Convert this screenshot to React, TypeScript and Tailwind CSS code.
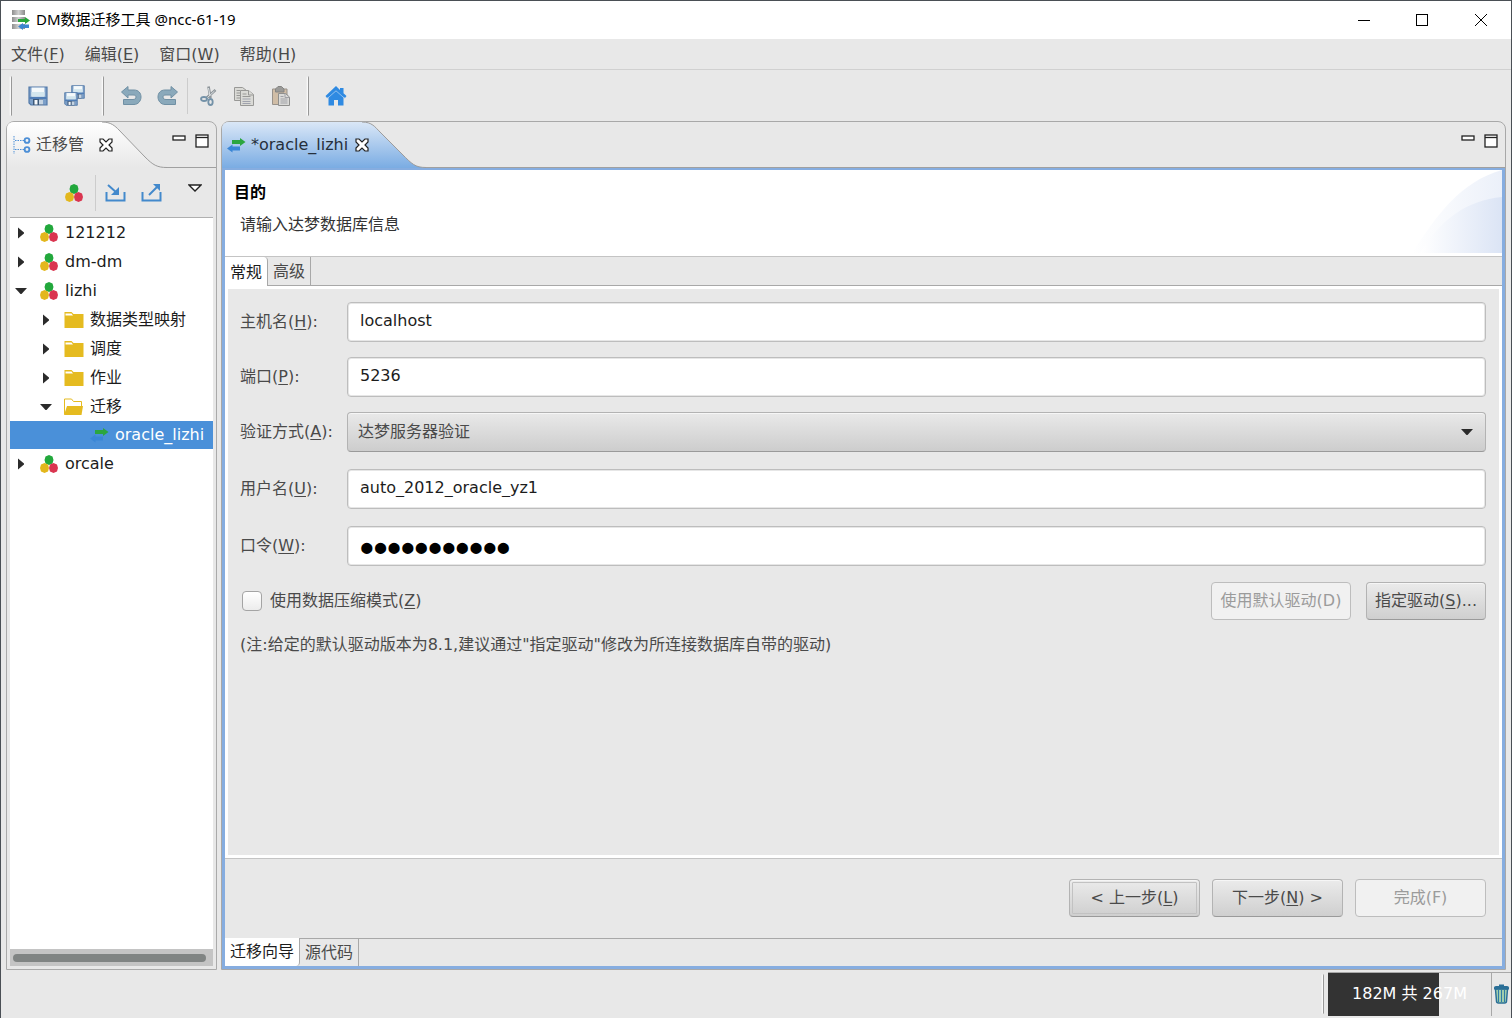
import React from 'react';
import clsx from 'clsx';

/* ---------- Icons ---------- */

function AppIcon() {
  return (
    <svg width="20" height="20" viewBox="0 0 20 20" aria-hidden="true">
      <defs>
        <linearGradient id="disk" x1="0" x2="1">
          <stop offset="0" stopColor="#8e8e8e" />
          <stop offset="0.5" stopColor="#d0d0d0" />
          <stop offset="1" stopColor="#8a8a8a" />
        </linearGradient>
      </defs>
      <rect x="1" y="0" width="13" height="5" fill="url(#disk)" />
      <rect x="1" y="7" width="13" height="5" fill="url(#disk)" />
      <rect x="1" y="14" width="13" height="5" fill="url(#disk)" />
      <path d="M7 9h7V7l5 3.500-5 3.500v-2H7z" fill="#27a53a" />
      <path d="M18 14.500h-6v-1.500l-5 3.500 5 3.500v-2h6z" fill="#3b86d0" />
    </svg>
  );
}

function Floppy({ x = 0, y = 0, size = 20 }: { x?: number; y?: number; size?: number }) {
  return (
    <svg x={x} y={y} width={size} height={size} viewBox="0 0 20 20" aria-hidden="true">
      <path d="M1 1h18v18H3l-2-2z" fill="#7c9fc8" stroke="#5279a8" strokeWidth="1.200" />
      <rect x="3.500" y="1.500" width="13" height="9" fill="#f4f9fb" />
      <path d="M3.500 6h13v4.500h-13z" fill="#d3e6ee" />
      <path d="M1.500 11h17v2h-17z" fill="#4f7db6" />
      <rect x="5" y="13" width="10" height="6" fill="#3c5878" />
      <rect x="6.500" y="14" width="3" height="4.500" fill="#f7f9fb" />
      <rect x="11" y="13.500" width="4" height="5" fill="#c5d4e3" />
    </svg>
  );
}

function SaveAllIcon() {
  return (
    <svg width="21" height="21" viewBox="0 0 21 21" aria-hidden="true">
      <Floppy x={7} y={0} size={14} />
      <Floppy x={0} y={7} size={14} />
    </svg>
  );
}

function UndoIcon({ flip = false }: { flip?: boolean }) {
  return (
    <svg width="21" height="20" viewBox="0 0 21 20" className={clsx(flip && '-scale-x-100')} aria-hidden="true">
      <path
        d="M0.500 6 7 0.500V4h6c4.500 0 7 3 7 7s-3 7.500-7 7.500H2.500v-5H12c2 0 3-1 3-2.500S14 9 12 9H7v3z"
        fill="#8aa9bb"
        stroke="#7090a4"
        strokeLinejoin="round"
      />
    </svg>
  );
}

function CutIcon() {
  return (
    <svg width="18" height="20" viewBox="0 0 18 20" fill="none" aria-hidden="true">
      <path d="M9.500 0.500 11.500 12M16.500 4 7 12.500" stroke="#8d9499" strokeWidth="2.600" />
      <path d="M9.500 2 11 10M15.500 5 8 12" stroke="#dfe3e5" />
      <ellipse cx="5" cy="13" rx="3" ry="2" stroke="#7492a8" strokeWidth="1.800" />
      <ellipse cx="11.500" cy="16" rx="2.200" ry="3" stroke="#7492a8" strokeWidth="1.800" />
    </svg>
  );
}

function CopyIcon() {
  return (
    <svg width="20" height="20" viewBox="0 0 20 20" fill="#dadad6" stroke="#989896" aria-hidden="true">
      <path d="M0.500 1.500h8l4 3v10h-12z" />
      <path d="M2.500 4.500h4M2.500 7h4M2.500 9.500h4M2.500 12h4" />
      <path d="M6.500 4.500h8l5 4v11h-13z" />
      <path d="M14.500 4.500v4.500h5M8.500 8h4M8.500 10.500h8" />
      <path d="M8.500 13h8M8.500 15.500h8M8.500 17.500h8" stroke="#a0a3ae" />
    </svg>
  );
}

function PasteIcon() {
  return (
    <svg width="19" height="20" viewBox="0 0 19 20" aria-hidden="true">
      <path d="M1.500 3h14.500v15.500h-14.500z" fill="#d0bda6" stroke="#98928b" />
      <path d="M4.500 3 7 0.500h3.500L13 3v3H4.500z" fill="#9a9a98" stroke="#858583" />
      <path d="M7.500 7.500h7l4 3.500v8.500h-11z" fill="#dadad8" stroke="#8f8f8d" />
      <path d="M14 7.500v4h4.500M9.500 10.500h3M9.500 13h7M9.500 15h7M9.500 17h7" fill="none" stroke="#a0a1a6" />
    </svg>
  );
}

function HomeIcon() {
  return (
    <svg width="22" height="20" viewBox="0 0 22 20" fill="#2f8ae2" aria-hidden="true">
      <path d="M11 0 0.500 10 2 12l1.500-1.300V19.500H9V14h4v5.500h5.500v-8.800L20 12l1.500-2-3-2.800V2h-3.500v2z" />
      <path d="M2.500 12.300 11 4.800l8.500 7.500" fill="none" stroke="#a9cdf0" strokeWidth="0.800" />
    </svg>
  );
}

function TreeViewIcon() {
  return (
    <svg width="18" height="18" viewBox="0 0 18 18" fill="none" stroke="#4d8fd6" aria-hidden="true">
      <path d="M1 0v18M2 4.500h9M2 13.500h9" strokeDasharray="1.500 1" />
      <circle cx="14" cy="4.500" r="2.400" strokeWidth="1.900" />
      <circle cx="14" cy="13.500" r="2.400" strokeWidth="1.900" />
    </svg>
  );
}

function ProjectIcon() {
  return (
    <svg width="18" height="18" viewBox="0 0 18 18" className="shrink-0" aria-hidden="true">
      <path d="M9 0l3.500 1.500L13.500 5l-1 3.500L9 10 5.500 8.500 4.500 5l1-3.500z" fill="#22a83c" />
      <path d="M4.500 8 8 9.500 9 13l-1 3.500L4.500 18 1 16.500 0 13l1-3.500z" fill="#e3b71d" />
      <path d="M13.500 8 17 9.500l1 3.500-1 3.500-3.500 1.500-3.500-1.500L9 13l1-3.500z" fill="#da3550" />
    </svg>
  );
}

function TrayIcon({ out = false }: { out?: boolean }) {
  return (
    <svg width="21" height="19" viewBox="0 0 21 19" fill="none" stroke="#4389cc" strokeWidth="2" aria-hidden="true">
      <path d="M1.500 9v8.500h18V9" />
      {out ? <path d="M8 12 17 3" /> : <path d="M3 2l9 8" />}
      <path d={out ? 'M12 1h7v7z' : 'M14 4v8H6z'} fill="#4389cc" stroke="none" />
    </svg>
  );
}

function FolderIcon({ open = false }: { open?: boolean }) {
  return (
    <svg width="20" height="17" viewBox="0 0 20 17" className="shrink-0" aria-hidden="true">
      {open ? (
        <>
          <path d="M0.500 16V1h7l2 2.500h8V8" fill="#fff" stroke="#e5bb20" />
          <path d="M3 8h16l-1.500 9H0z" fill="#e5bb20" />
        </>
      ) : (
        <path d="M0.500 1h7l2 2h10v14h-19z M1.500 2.500v2h7.500L7.500 2.500z" fill="#e5bb20" fillRule="evenodd" />
      )}
    </svg>
  );
}

function TransferIcon() {
  return (
    <svg width="19" height="15" viewBox="0 0 19 15" className="shrink-0" aria-hidden="true">
      <path d="M5 2h8V0l5.500 4L13 8V6H5z" fill="#2ba640" />
      <path d="M13 8.500H5.500V6.500L0 10.500l5.500 4v-2H13z" fill="#3a86d6" />
    </svg>
  );
}

function CloseIcon() {
  return (
    <svg width="14" height="15" viewBox="0 0 14 15" fill="#fff" stroke="#222" strokeWidth="1.200" aria-hidden="true">
      <path d="M1 1h3l3 3L10 1h3v3l-3 3 3 3v3h-3l-3-3-3 3H1v-3l3-3-3-3z" />
    </svg>
  );
}

function TrashIcon() {
  return (
    <svg width="15" height="20" viewBox="0 0 15 20" aria-hidden="true">
      <path d="M1.500 5h12l-1 12q0 2-2 2h-6q-2 0-2-2z" fill="#b5dcae" stroke="#2a6f97" strokeWidth="1.500" />
      <path d="M4.500 6v12M7.500 6v12M10.500 6v12" stroke="#2f7ba6" strokeWidth="1.300" />
      <path d="M0 3.500Q0 2 2 2h3V0.500h5V2h3q2 0 2 1.500V5.500H0z" fill="#2a6f97" />
    </svg>
  );
}

function Expander({ open }: { open: boolean }) {
  return (
    <svg width="12" height="12" viewBox="0 0 12 12" fill="#2b2b2b" className="shrink-0" aria-hidden="true">
      {open ? <path d="M0 3h12L6.500 9h-1z" /> : <path d="M3 0.500 9 5.500v1L3 11.500z" />}
    </svg>
  );
}

/* ---------- Small shared parts ---------- */

// Label with an underlined mnemonic, e.g. 文件(F)
function Mnemonic({ text, k, after = '' }: { text: string; k: string; after?: string }) {
  return (
    <>
      {text}(<span className="underline underline-offset-2">{k}</span>){after}
    </>
  );
}

function Grip() {
  return <div className="h-10 w-[3px] shrink-0 rounded-sm border-r border-[#989898] bg-gradient-to-r from-[#e8e8e8] to-white" />;
}

function ToolButton({ label, children }: { label: string; children: React.ReactNode }) {
  return (
    <button type="button" aria-label={label} className="flex h-9 w-9 items-center justify-center">
      {children}
    </button>
  );
}

function PaneControls() {
  return (
    <div className="flex gap-[9px] pt-3">
      <button type="button" aria-label="最小化" className="h-[14px]">
        <svg width="14" height="14" fill="#fff" stroke="#222" aria-hidden="true">
          <rect x="1" y="2" width="12" height="4" strokeWidth="1.300" />
        </svg>
      </button>
      <button type="button" aria-label="最大化" className="h-[14px]">
        <svg width="14" height="14" fill="#fff" stroke="#222" aria-hidden="true">
          <rect x="1" y="1" width="12" height="12" strokeWidth="1.300" />
          <path d="M1 3.500h12" strokeWidth="1.300" />
        </svg>
      </button>
    </div>
  );
}

const buttonBase = 'h-[38px] rounded border text-center';
const buttonOn =
  'border-[#b3b3b3] border-b-[#9a9a9a] bg-gradient-to-b from-[#ebebeb] to-[#cfcfcf] text-[#4a4a4a] shadow-[inset_0_1px_0_#f6f6f6]';
const buttonOff = 'border-[#bdbdbd] bg-[#f1f1f1] text-[#9b9b9b]';

/* ---------- Window chrome ---------- */

function TitleBar() {
  return (
    <header className="flex h-[38px] items-center bg-white pl-[10px] text-black">
      <AppIcon />
      <h1 className="ml-[5px] flex-1 pb-[2px] font-['Noto_Sans','Noto_Sans_CJK_SC',sans-serif] text-[15px]">
        DM数据迁移工具 @ncc-61-19
      </h1>
      <div className="flex">
        <button type="button" aria-label="最小化窗口" className="flex h-9 w-[58px] items-center justify-center">
          <svg width="12" height="12" stroke="#000"><path d="M0 6.500h12" /></svg>
        </button>
        <button type="button" aria-label="最大化窗口" className="flex h-9 w-[58px] items-center justify-center">
          <svg width="12" height="12" fill="none" stroke="#000"><rect x="0.500" y="0.500" width="11" height="11" /></svg>
        </button>
        <button type="button" aria-label="关闭窗口" className="flex h-9 w-[60px] items-center justify-center">
          <svg width="12" height="12" stroke="#000"><path d="M0 0l12 12M12 0 0 12" /></svg>
        </button>
      </div>
    </header>
  );
}

const menus = [
  { text: '文件', k: 'F' },
  { text: '编辑', k: 'E' },
  { text: '窗口', k: 'W' },
  { text: '帮助', k: 'H' },
];

function MenuBar() {
  return (
    <nav className="flex h-[31px] items-center gap-5 border-b border-[#d0d0d0] pt-[2px] pl-[10px]">
      {menus.map((m) => (
        <button key={m.k} type="button">
          <Mnemonic text={m.text} k={m.k} />
        </button>
      ))}
    </nav>
  );
}

function MainToolbar() {
  return (
    <div className="flex h-[51px] items-center pl-2">
      <Grip />
      <div className="mr-[9px] ml-2 flex">
        <ToolButton label="保存"><Floppy /></ToolButton>
        <ToolButton label="全部保存"><SaveAllIcon /></ToolButton>
      </div>
      <Grip />
      <div className="mr-2 ml-[9px] flex items-center">
        <ToolButton label="撤销"><UndoIcon /></ToolButton>
        <ToolButton label="重做"><UndoIcon flip /></ToolButton>
        <div className="mx-[2px] h-9 w-px bg-[#cccccc]" />
        <ToolButton label="剪切"><CutIcon /></ToolButton>
        <ToolButton label="复制"><CopyIcon /></ToolButton>
        <ToolButton label="粘贴"><PasteIcon /></ToolButton>
      </div>
      <Grip />
      <div className="ml-[9px] flex">
        <ToolButton label="主页"><HomeIcon /></ToolButton>
      </div>
    </div>
  );
}

/* ---------- Navigator ---------- */

type Node = { label: string; level: 0 | 1 | 2; kind: 'project' | 'folder' | 'transfer'; open?: boolean };

const nodes: Node[] = [
  { label: '121212', level: 0, kind: 'project' },
  { label: 'dm-dm', level: 0, kind: 'project' },
  { label: 'lizhi', level: 0, kind: 'project', open: true },
  { label: '数据类型映射', level: 1, kind: 'folder' },
  { label: '调度', level: 1, kind: 'folder' },
  { label: '作业', level: 1, kind: 'folder' },
  { label: '迁移', level: 1, kind: 'folder', open: true },
  { label: 'oracle_lizhi', level: 2, kind: 'transfer' },
  { label: 'orcale', level: 0, kind: 'project' },
];

function TreeRow({ node }: { node: Node }) {
  const leaf = node.kind === 'transfer';
  return (
    <li
      role="treeitem"
      aria-selected={leaf}
      aria-expanded={leaf ? undefined : !!node.open}
      className={clsx(
        'flex items-center whitespace-nowrap',
        node.level === 0 && 'h-[29px] pl-[5px]',
        node.level === 1 && 'h-[29px] pl-[30px]',
        node.level === 2 && 'h-7 bg-[#4a90d9] pl-[80px] text-white',
      )}
    >
      {!leaf && <Expander open={!!node.open} />}
      <span
        className={clsx(
          'flex',
          node.kind === 'project' && 'mr-[7px] ml-[13px]',
          node.kind === 'folder' && 'mr-[6px] ml-3',
          node.kind === 'transfer' && 'mr-[6px]',
        )}
      >
        {node.kind === 'project' && <ProjectIcon />}
        {node.kind === 'folder' && <FolderIcon open={node.open} />}
        {node.kind === 'transfer' && <TransferIcon />}
      </span>
      {node.label}
    </li>
  );
}

function Navigator() {
  return (
    <aside className="flex w-[211px] shrink-0 flex-col rounded-t-lg border border-[#aaaaaa]">
      <div className="flex h-[46px]">
        <div className="relative w-[160px] shrink-0">
          <svg width="160" height="46" className="absolute inset-0" aria-hidden="true">
            <defs>
              <linearGradient id="navTab" x1="0" y1="0" x2="0" y2="1">
                <stop offset="0" stopColor="#fff" />
                <stop offset="1" stopColor="#e8e8e8" />
              </linearGradient>
            </defs>
            <path d="M0 7Q0 0 7 0H95C104 0 108 4 112 8L138 35C146 43 150 45.500 160 45.500V46H0z" fill="url(#navTab)" />
            <path d="M95 0C104 0 108 4 112 8L138 35C146 43 150 45.500 160 45.500" fill="none" stroke="#9c9c9c" />
          </svg>
          <div className="relative flex h-full items-center pl-[6px]">
            <TreeViewIcon />
            <span className="ml-[5px]">迁移管</span>
            <button type="button" aria-label="关闭视图" className="ml-[15px]"><CloseIcon /></button>
          </div>
        </div>
        <div className="flex flex-1 justify-end border-b border-[#a0a0a0] pr-[7px]">
          <PaneControls />
        </div>
      </div>

      <div className="flex h-[49px] items-center justify-end pr-[14px]">
        <ToolButton label="新建工程"><ProjectIcon /></ToolButton>
        <div className="mr-px ml-[3px] h-9 w-px bg-[#cccccc]" />
        <ToolButton label="导入"><TrayIcon /></ToolButton>
        <ToolButton label="导出"><TrayIcon out /></ToolButton>
        <button type="button" aria-label="视图菜单" className="mb-[10px] ml-[19px]">
          <svg width="14" height="8" fill="#fff" stroke="#222" strokeWidth="1.300"><path d="M1 1h12L7 7z" /></svg>
        </button>
      </div>

      <div className="mx-[3px] mb-[3px] flex flex-1 flex-col border-t border-[#b0b0b0] bg-white">
        <ul role="tree" className="flex-1 text-[#1c1c1c]">
          {nodes.map((n) => (
            <TreeRow key={n.label} node={n} />
          ))}
        </ul>
        <div className="flex h-[17px] items-center bg-[#c4c4c4] pr-[7px] pl-[3px]">
          <div className="h-2 flex-1 rounded-full bg-[#808483]" />
        </div>
      </div>
    </aside>
  );
}

/* ---------- Editor ---------- */

const fieldBox = 'h-10 w-full rounded border border-[#bdbdbd] bg-white pl-3 shadow-[inset_0_0_0_1px_#e6e6e6] outline-none';

function Field({ id, label, children }: { id: string; label: React.ReactNode; children: React.ReactNode }) {
  return (
    <div className="grid grid-cols-[107px_1fr] items-center">
      <label htmlFor={id} className="pb-px">{label}</label>
      {children}
    </div>
  );
}

function TextField({ id, label, value }: { id: string; label: React.ReactNode; value: string }) {
  return (
    <Field id={id} label={label}>
      <input id={id} className={clsx(fieldBox, 'pb-[3px] text-[#1c1c1c]')} defaultValue={value} />
    </Field>
  );
}

function ConnectionForm() {
  return (
    <div className="flex-1 border-3 border-white pt-[13px] pr-[13px] pl-3">
      <div className="flex flex-col gap-[15px]">
        <TextField id="host" label={<Mnemonic text="主机名" k="H" after=":" />} value="localhost" />
        <TextField id="port" label={<Mnemonic text="端口" k="P" after=":" />} value="5236" />
        <Field id="auth" label={<Mnemonic text="验证方式" k="A" after=":" />}>
          <div className="relative">
            <select
              id="auth"
              className="block h-10 w-full appearance-none rounded border border-[#b3b3b3] border-b-[#9a9a9a] bg-gradient-to-b from-[#e9e9e9] to-[#cdcdcd] pl-[10px] shadow-[inset_0_1px_0_#f6f6f6] outline-none"
            >
              <option>达梦服务器验证</option>
            </select>
            <svg width="12" height="6" fill="#2b2b2b" className="pointer-events-none absolute top-[17px] right-[13px]">
              <path d="M0 0h12L6.500 6h-1z" />
            </svg>
          </div>
        </Field>
      </div>
      <div className="mt-[17px] flex flex-col gap-[17px]">
        <TextField id="user" label={<Mnemonic text="用户名" k="U" after=":" />} value="auto_2012_oracle_yz1" />
        <Field id="pwd" label={<Mnemonic text="口令" k="W" after=":" />}>
          <input
            id="pwd"
            type="password"
            className={clsx(fieldBox, "pt-1 font-['Liberation_Sans',sans-serif] text-[39px] font-bold text-black")}
            defaultValue="dameng12345"
          />
        </Field>
      </div>

      <div className="mt-4 flex items-center">
        <label className="flex flex-1 items-center gap-2 pl-[2px]">
          <input
            type="checkbox"
            className="h-5 w-5 appearance-none rounded border border-[#a4a4a4] bg-gradient-to-b from-white to-[#ececec]"
          />
          <span><Mnemonic text="使用数据压缩模式" k="Z" /></span>
        </label>
        <button type="button" disabled className={clsx(buttonBase, buttonOff, 'mr-[15px] w-[140px]')}>
          使用默认驱动(D)
        </button>
        <button type="button" className={clsx(buttonBase, buttonOn, 'w-[120px]')}>
          <Mnemonic text="指定驱动" k="S" after="..." />
        </button>
      </div>
      <p className="mt-[13px]">(注:给定的默认驱动版本为8.1,建议通过"指定驱动"修改为所连接数据库自带的驱动)</p>
    </div>
  );
}

function Editor() {
  return (
    <main className="flex min-w-0 flex-1 flex-col rounded-t-lg border border-[#a8a8a8]">
      <div className="flex h-[46px]">
        <div className="relative w-[204px] shrink-0">
          <svg width="204" height="46" className="absolute inset-0" aria-hidden="true">
            <defs>
              <linearGradient id="editorTab" x1="0" y1="0" x2="0" y2="1">
                <stop offset="0" stopColor="#dae7f7" />
                <stop offset="1" stopColor="#7aace3" />
              </linearGradient>
            </defs>
            <path d="M0 7Q0 0 7 0H140C150 0 153 5 158 10L180 32C190 42 193 45.500 204 45.500V46H0z" fill="url(#editorTab)" />
            <path d="M140 0C150 0 153 5 158 10L180 32C190 42 193 45.500 204 45.500" fill="none" stroke="#9c9c9c" />
          </svg>
          <div className="relative flex h-full items-center pl-[5px] text-[#26303c]">
            <TransferIcon />
            <span className="ml-[5px]">*oracle_lizhi</span>
            <button type="button" aria-label="关闭编辑器" className="ml-[7px]"><CloseIcon /></button>
          </div>
        </div>
        <div className="flex flex-1 justify-end border-b border-[#a0a0a0] pr-[7px]">
          <PaneControls />
        </div>
      </div>

      <div className="flex flex-1 flex-col border-3 border-t-2 border-[#86ade0]">
        <div className="flex h-[87px] justify-between border-b border-[#c4c4c4] bg-white">
          <div className="pt-[11px] pl-[9px]">
            <h2 className="leading-6 font-bold text-black">目的</h2>
            <p className="mt-2 pl-[6px] leading-6 text-[#333]">请输入达梦数据库信息</p>
          </div>
          <svg width="90" height="83" viewBox="0 0 90 83" aria-hidden="true">
            <defs>
              <linearGradient id="swoosh" x1="0" x2="1">
                <stop offset="0" stopColor="#fff" />
                <stop offset="1" stopColor="#dbe4f5" />
              </linearGradient>
            </defs>
            <path d="M0 83C25 45 48 12 90 0V83z" fill="url(#swoosh)" opacity="0.550" />
            <path d="M8 83C28 50 55 30 90 27V83z" fill="url(#swoosh)" />
          </svg>
        </div>

        <div role="tablist" className="flex h-[29px] border-b border-[#a8a8a8]">
          <button type="button" role="tab" aria-selected="true" className="-mb-px rounded-tr border-r border-[#a8a8a8] bg-white px-[5px] pt-[2px] text-[#1c1c1c]">
            常规
          </button>
          <button type="button" role="tab" aria-selected="false" className="border-r border-[#a8a8a8] px-[5px] pt-[2px]">
            高级
          </button>
        </div>

        <ConnectionForm />

        <div className="flex h-20 items-center justify-end gap-3 border-t border-[#c4c4c4] pr-4 pb-[2px]">
          <button type="button" className={clsx(buttonBase, buttonOn, 'w-[131px] outline outline-offset-[-4px] outline-[#c2c2c2]')}>
            <Mnemonic text="< 上一步" k="L" />
          </button>
          <button type="button" className={clsx(buttonBase, buttonOn, 'w-[131px]')}>
            <Mnemonic text="下一步" k="N" after=" >" />
          </button>
          <button type="button" disabled className={clsx(buttonBase, buttonOff, 'w-[131px]')}>
            完成(F)
          </button>
        </div>

        <div role="tablist" className="flex h-7 border-t border-[#a8a8a8]">
          <button type="button" role="tab" aria-selected="true" className="-mt-px rounded-br border-r border-[#a8a8a8] bg-white px-[5px] text-[#1c1c1c]">
            迁移向导
          </button>
          <button type="button" role="tab" aria-selected="false" className="border-r border-[#a8a8a8] px-[5px]">
            源代码
          </button>
        </div>
      </div>
    </main>
  );
}

/* ---------- Status bar ---------- */

function StatusBar() {
  const used = 182;
  const total = 267;
  return (
    <footer className="flex h-12 items-center justify-end pb-px">
      <Grip />
      <div className="relative ml-1 flex h-11 w-[164px] items-center justify-center border-t border-r border-[#a8a8a8] text-white">
        <div className="absolute inset-y-0 left-0 bg-[#333333]" style={{ width: `${(used / total) * 100}%` }} />
        <span className="relative">{used}M 共 {total}M</span>
      </div>
      <button type="button" aria-label="运行垃圾回收" className="flex h-11 w-[19px] items-center justify-center border-t border-[#a8a8a8]">
        <TrashIcon />
      </button>
    </footer>
  );
}

export default function App() {
  return (
    <div className="flex min-h-screen flex-col border-x border-t border-[#4a4f55] bg-[#e8e8e8] font-['DejaVu_Sans','Noto_Sans_CJK_SC',sans-serif] text-base text-[#4a4a4a]">
      <TitleBar />
      <MenuBar />
      <MainToolbar />
      <div className="flex flex-1 gap-1 px-[5px]">
        <Navigator />
        <Editor />
      </div>
      <StatusBar />
    </div>
  );
}
